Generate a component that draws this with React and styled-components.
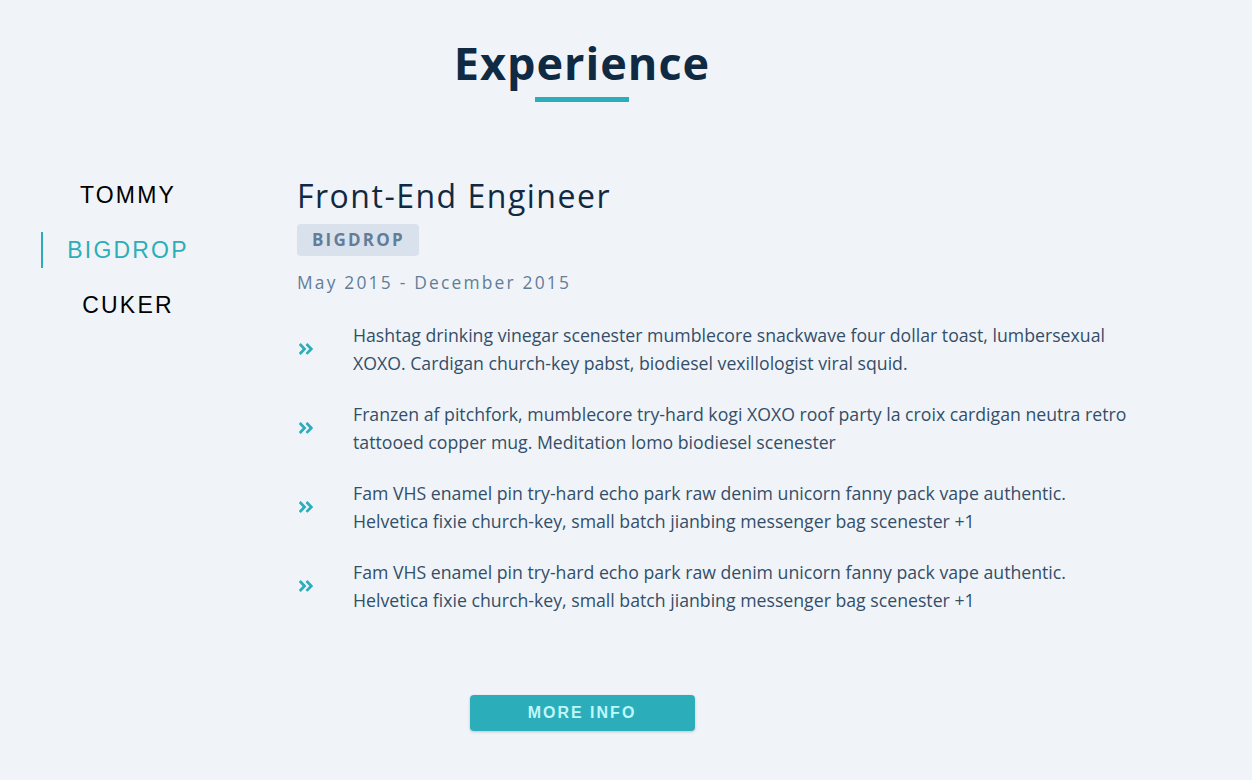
import React, { useState } from 'react';
import styled, { createGlobalStyle } from 'styled-components';
import { FaAngleDoubleRight } from 'react-icons/fa';

const GlobalStyle = createGlobalStyle`
    * { box-sizing: border-box; }
    body {
        margin: 0;
        background: #f0f4f8;
        font-family: "Open Sans", "Noto Sans", sans-serif;
        color: #102a43;
    }
`;

const Section = styled.section`
    width: 1164px;
    padding: 34px 0 48px;
`;

const Title = styled.div`
    text-align: center;
    margin-bottom: 72px;

    h2 {
        margin: 0;
        font-size: 45px;
        font-weight: 700;
        letter-spacing: 1px;
        line-height: 58px;
        color: #102a43;
    }
`;

const Underline = styled.div`
    width: 94px;
    height: 5px;
    margin: 5px auto 0;
    background: #2caeba;
`;

const Center = styled.div`
    display: grid;
    grid-template-columns: 172px 1fr;
    column-gap: 84px;
    padding-left: 41px;
`;

const Nav = styled.div`
    display: flex;
    flex-direction: column;
    padding-top: 3px;
`;

const NavButton = styled.button`
    height: 36px;
    margin-bottom: 19px;
    background: transparent;
    border: none;
    border-left: 2px solid ${({ $active }) => ($active ? '#2caeba' : 'transparent')};
    font-family: "Liberation Sans", Arial, sans-serif;
    font-size: 23px;
    letter-spacing: 2.2px;
    text-transform: uppercase;
    color: ${({ $active }) => ($active ? '#2caeba' : '#000')};
    cursor: pointer;
    padding: 0;
`;

const Job = styled.article`
    min-width: 0;
`;

const JobTitle = styled.h3`
    margin: 0;
    font-size: 32px;
    font-weight: 400;
    letter-spacing: 1.5px;
    line-height: 44px;
`;

const Company = styled.div`
    width: fit-content;
    margin-top: 6px;
    padding: 0 14px 0 15px;
    height: 32px;
    line-height: 32px;
    background: #d9e2ec;
    color: #627d98;
    border-radius: 4px;
    font-size: 17px;
    font-weight: 700;
    letter-spacing: 2.2px;
`;

const JobDate = styled.p`
    margin: 14px 0 27px;
    font-size: 17.4px;
    letter-spacing: 2.2px;
    color: #627d98;
`;

const Duty = styled.div`
    display: grid;
    grid-template-columns: 56px 1fr;
    align-items: center;
    margin-bottom: 23px;

    p {
        margin: 0;
        font-size: 17.7px;
        line-height: 28px;
        color: #334e68;
        max-width: 785px;
    }
`;

const DutyIcon = styled(FaAngleDoubleRight)`
    color: #2caeba;
    font-size: 18px;
`;

const MoreButton = styled.button`
    display: block;
    width: 225px;
    height: 36px;
    margin: 58px auto 0;
    background: #2caeba;
    color: #bef8fd;
    border: none;
    border-radius: 4px;
    box-shadow: 0 1px 3px rgba(0, 0, 0, 0.2);
    font-family: "Liberation Sans", Arial, sans-serif;
    font-size: 16px;
    font-weight: 700;
    letter-spacing: 2px;
    text-transform: uppercase;
    cursor: pointer;
`;

const jobs = [
    { company: 'Tommy' },
    { company: 'Bigdrop' },
    { company: 'Cuker' },
];

const duties = [
    'Hashtag drinking vinegar scenester mumblecore snackwave four dollar toast, lumbersexual XOXO. Cardigan church-key pabst, biodiesel vexillologist viral squid.',
    'Franzen af pitchfork, mumblecore try-hard kogi XOXO roof party la croix cardigan neutra retro tattooed copper mug. Meditation lomo biodiesel scenester',
    'Fam VHS enamel pin try-hard echo park raw denim unicorn fanny pack vape authentic. Helvetica fixie church-key, small batch jianbing messenger bag scenester +1',
    'Fam VHS enamel pin try-hard echo park raw denim unicorn fanny pack vape authentic. Helvetica fixie church-key, small batch jianbing messenger bag scenester +1',
];

const App = () => {
    const [value, setValue] = useState(1);
    return (
        <>
            <GlobalStyle />
            <Section>
                <Title>
                    <h2>Experience</h2>
                    <Underline />
                </Title>
                <Center>
                    <Nav>
                        {jobs.map((job, index) => (
                            <NavButton key={job.company} $active={index === value} onClick={() => setValue(index)}>
                                {job.company}
                            </NavButton>
                        ))}
                    </Nav>
                    <Job>
                        <JobTitle>Front-End Engineer</JobTitle>
                        <Company>BIGDROP</Company>
                        <JobDate>May 2015 - December 2015</JobDate>
                        {duties.map((duty, index) => (
                            <Duty key={index}>
                                <DutyIcon />
                                <p>{duty}</p>
                            </Duty>
                        ))}
                    </Job>
                </Center>
                <MoreButton>More Info</MoreButton>
            </Section>
        </>
    );
};

export default App;
